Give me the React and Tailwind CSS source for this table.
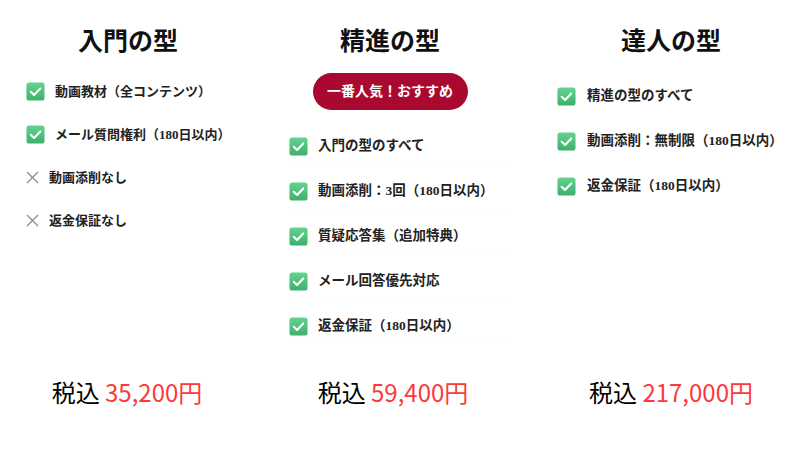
import React from "react";

const serif = { fontFamily: '"Liberation Serif", "Noto Sans CJK JP", serif' };

function CheckIcon() {
  return (
    <svg width="19" height="19" viewBox="0 0 20 20" className="shrink-0">
      <defs>
        <linearGradient id="g" x1="0" y1="0" x2="0" y2="1">
          <stop offset="0" stopColor="#63d48f" />
          <stop offset="1" stopColor="#3fb06b" />
        </linearGradient>
      </defs>
      <rect x="0.5" y="0.5" width="19" height="19" rx="3" fill="url(#g)" />
      <path d="M5 10.3 L8.5 13.6 L15 6.8" fill="none" stroke="#fff" strokeWidth="2.2" strokeLinecap="round" strokeLinejoin="round" />
    </svg>
  );
}

function CrossIcon() {
  return (
    <svg width="13" height="13" viewBox="0 0 13 13" className="shrink-0">
      <path d="M1 1 L12 12 M12 1 L1 12" stroke="#8a8a8a" strokeWidth="1.2" />
    </svg>
  );
}

function Price({ amount }) {
  return (
    <p className="text-[24px] leading-none text-center" style={{ fontFamily: '"Noto Sans CJK JP", sans-serif' }}>
      <span className="text-black">税込 </span>
      <span className="text-[#fb3a3a]">{amount}</span>
    </p>
  );
}

function App() {
  const basic = [
    { ok: true, text: "動画教材（全コンテンツ）" },
    { ok: true, text: "メール質問権利（180日以内）" },
    { ok: false, text: "動画添削なし" },
    { ok: false, text: "返金保証なし" },
  ];
  const standard = [
    "入門の型のすべて",
    "動画添削：3回（180日以内）",
    "質疑応答集（追加特典）",
    "メール回答優先対応",
    "返金保証（180日以内）",
  ];
  const master = ["精進の型のすべて", "動画添削：無制限（180日以内）", "返金保証（180日以内）"];

  return (
    <div className="w-[810px] h-[450px] bg-white flex text-[#222]" style={serif}>
      {/* 入門 */}
      <div className="w-[256px] flex flex-col pt-[29px]">
        <h2 className="text-[25px] leading-[26px] font-bold text-center text-[#111]">入門の型</h2>
        <ul className="mt-[15px] pl-[26px]">
          {basic.map((item) => (
            <li key={item.text} className="h-[43px] flex items-center">
              {item.ok ? <CheckIcon /> : <CrossIcon />}
              <span className="ml-[10px] text-[13px] font-bold">{item.text}</span>
            </li>
          ))}
        </ul>
        <div className="mt-auto mb-[46px] pr-[2px]">
          <Price amount="35,200円" />
        </div>
      </div>

      {/* 精進 */}
      <div className="w-[268px] flex flex-col pt-[29px]">
        <h2 className="text-[25px] leading-[26px] font-bold text-center text-[#111]">精進の型</h2>
        <div className="mt-[18px] flex justify-center">
          <span className="h-[37px] w-[155px] rounded-full bg-[#a9082f] text-white text-[14px] font-bold flex items-center justify-center">
            一番人気！おすすめ
          </span>
        </div>
        <ul className="mt-[20px] ml-[33px] w-[216px]">
          {standard.map((text) => (
            <li key={text} className="h-[34px] mb-[11px] flex items-center border-b border-[#fbfbfb]">
              <CheckIcon />
              <span className="ml-[10px] text-[13.5px] font-bold">{text}</span>
            </li>
          ))}
        </ul>
        <div className="mt-auto mb-[46px] pl-[6px]">
          <Price amount="59,400円" />
        </div>
      </div>

      {/* 達人 */}
      <div className="flex-1 flex flex-col pt-[29px] pl-[8px]">
        <h2 className="text-[25px] leading-[26px] font-bold text-center text-[#111]">達人の型</h2>
        <ul className="mt-[19px] pl-[25px]">
          {master.map((text) => (
            <li key={text} className="h-[45px] flex items-center">
              <CheckIcon />
              <span className="ml-[11px] text-[13.5px] font-bold">{text}</span>
            </li>
          ))}
        </ul>
        <div className="mt-auto mb-[46px]">
          <Price amount="217,000円" />
        </div>
      </div>
    </div>
  );
}

export default App;
